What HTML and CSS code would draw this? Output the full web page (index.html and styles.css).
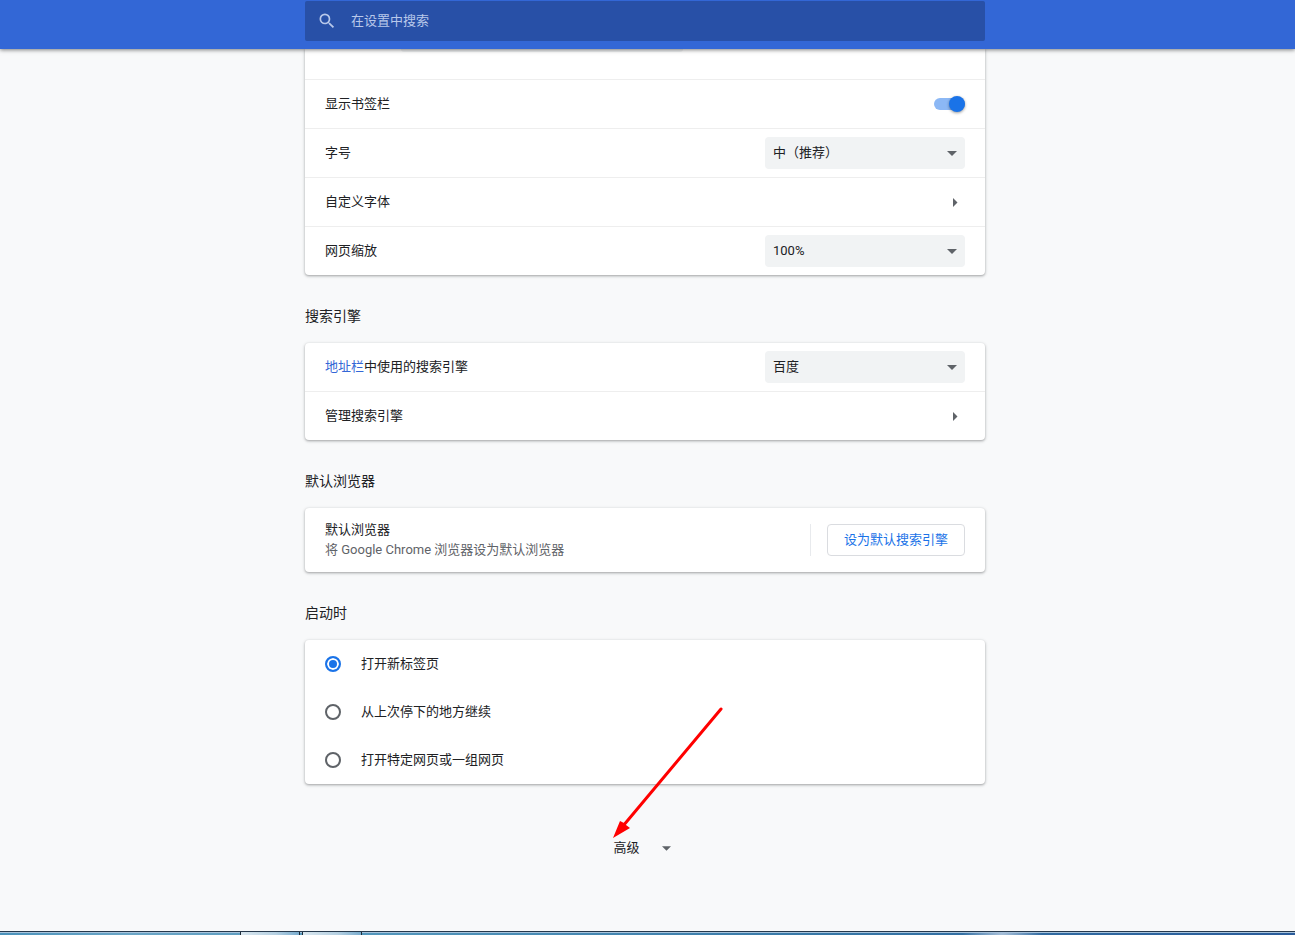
FILE: index.html
```html
<!DOCTYPE html>
<html lang="zh-CN">
<head>
<meta charset="utf-8">
<meta name="viewport" content="width=device-width, initial-scale=1">
<title>设置</title>
<link rel="stylesheet" href="styles.css">
</head>
<body>
<header class="toolbar">
  <label class="search">
    <svg class="search-icon" viewBox="0 0 24 24" aria-hidden="true"><path d="M15.5 14h-.79l-.28-.27A6.471 6.471 0 0 0 16 9.5 6.5 6.5 0 1 0 9.5 16c1.61 0 3.09-.59 4.23-1.57l.27.28v.79l5 4.99L20.49 19l-4.99-5zm-6 0C7.01 14 5 11.99 5 9.5S7.01 5 9.5 5 14 7.01 14 9.5 11.99 14 9.5 14z"/></svg>
    <input class="search-input" type="search" placeholder="在设置中搜索" aria-label="在设置中搜索">
  </label>
</header>
<main class="content">
  <section class="card card-scrolled">
    <div class="row-partial"><div class="field-edge"></div></div>
    <div class="row">
      <label for="bookmarks">显示书签栏</label>
      <input class="toggle" id="bookmarks" type="checkbox" role="switch" checked>
    </div>
    <div class="row">
      <label for="font-size">字号</label>
      <div class="select-wrap">
        <select class="select" id="font-size"><option>中（推荐）</option></select>
        <svg class="select-arrow" viewBox="0 0 10 5" aria-hidden="true"><path d="M0 0h10L5 5z"/></svg>
      </div>
    </div>
    <button class="row row-button" type="button">
      <span>自定义字体</span>
      <svg class="row-arrow" viewBox="0 0 5 9" aria-hidden="true"><path d="M0 0v9l4.500-4.500z"/></svg>
    </button>
    <div class="row">
      <label for="zoom">网页缩放</label>
      <div class="select-wrap">
        <select class="select" id="zoom"><option>100%</option></select>
        <svg class="select-arrow" viewBox="0 0 10 5" aria-hidden="true"><path d="M0 0h10L5 5z"/></svg>
      </div>
    </div>
  </section>

  <h2 class="heading">搜索引擎</h2>
  <section class="card">
    <div class="row">
      <label for="engine"><a class="link" href="#omnibox">地址栏</a>中使用的搜索引擎</label>
      <div class="select-wrap">
        <select class="select" id="engine"><option>百度</option></select>
        <svg class="select-arrow" viewBox="0 0 10 5" aria-hidden="true"><path d="M0 0h10L5 5z"/></svg>
      </div>
    </div>
    <button class="row row-button" type="button">
      <span>管理搜索引擎</span>
      <svg class="row-arrow" viewBox="0 0 5 9" aria-hidden="true"><path d="M0 0v9l4.500-4.500z"/></svg>
    </button>
  </section>

  <h2 class="heading">默认浏览器</h2>
  <section class="card">
    <div class="row row-tall">
      <div class="row-text">
        <div>默认浏览器</div>
        <div class="secondary">将 Google Chrome 浏览器设为默认浏览器</div>
      </div>
      <div class="action"><button class="outline-button" type="button">设为默认搜索引擎</button></div>
    </div>
  </section>

  <h2 class="heading">启动时</h2>
  <section class="card">
    <label class="radio-row"><input class="radio" type="radio" name="startup" checked><span>打开新标签页</span></label>
    <label class="radio-row"><input class="radio" type="radio" name="startup"><span>从上次停下的地方继续</span></label>
    <label class="radio-row"><input class="radio" type="radio" name="startup"><span>打开特定网页或一组网页</span></label>
  </section>

  <div class="advanced">
    <button class="advanced-button" type="button">
      <span>高级</span>
      <svg class="advanced-arrow" viewBox="0 0 10 5" aria-hidden="true"><path d="M0 0h10L5 5z"/></svg>
    </button>
    <svg class="pointer" viewBox="0 0 112 134" aria-hidden="true">
      <path class="pointer-line" d="M108 4 10 121"/>
      <path class="pointer-head" d="M0 133 7 116l4 2 2 2 4 3z"/>
    </svg>
  </div>
</main>
<footer class="taskbar">
  <div class="task"></div>
  <div class="task"></div>
</footer>
</body>
</html>
```

FILE: styles.css
```css
* {
  box-sizing: border-box;
}

body {
  margin: 0;
  min-height: 100vh;
  display: flex;
  flex-direction: column;
  background: #f8f9fa;
  color: #202124;
  font: 13px/20px Roboto, "Noto Sans CJK SC", sans-serif;
}

button,
input,
select {
  font: inherit;
  color: inherit;
  margin: 0;
}

.toolbar {
  position: sticky;
  top: 0;
  z-index: 2;
  padding: 1px 5px 8px 0;
  background: #3367d6;
  box-shadow: 0 1px 4px rgba(0, 0, 0, 0.5);
}

.search {
  display: flex;
  align-items: center;
  gap: 14px;
  max-width: 680px;
  height: 40px;
  margin: 0 auto;
  padding: 0 12px;
  border-radius: 2px;
  background: #2850a7;
}

.search-icon {
  width: 20px;
  height: 20px;
  fill: #b8c8ea;
}

.search-input {
  flex: 1;
  height: 20px;
  padding: 0;
  border: 0;
  outline: 0;
  background: transparent;
  color: #fff;
}

.search-input::placeholder {
  color: #b8c8ea;
}

.content {
  flex: 1;
  width: 100%;
  max-width: 685px;
  margin: 0 auto;
  padding-right: 5px;
}

.card {
  border-radius: 4px;
  background: #fff;
  box-shadow: 0 1px 2px rgba(60, 64, 67, 0.3), 0 1px 3px 1px rgba(60, 64, 67, 0.15);
}

.card-scrolled {
  border-top-left-radius: 0;
  border-top-right-radius: 0;
}

.heading {
  margin: 0;
  padding: 30px 0 16px;
  font-size: 14px;
  font-weight: 400;
  line-height: 22px;
}

.row-partial {
  height: 30px;
  padding-left: 96px;
}

.field-edge {
  width: 282px;
  height: 3px;
  border-radius: 0 0 4px 4px;
  background: #f1f3f4;
}

.row {
  display: flex;
  align-items: center;
  justify-content: space-between;
  width: 100%;
  height: 48px;
  padding: 0 20px;
}

.row-partial + .row,
.row + .row {
  height: 49px;
  border: 0;
  border-top: 1px solid #eee;
}

.row-button {
  background: transparent;
  text-align: left;
}

.row-tall {
  height: 64px;
}

.link {
  color: #3367d6;
  text-decoration: none;
}

.secondary {
  color: #5f6368;
}

.select-wrap {
  position: relative;
  width: 200px;
}

.select {
  appearance: none;
  display: block;
  width: 100%;
  height: 32px;
  padding: 0 24px 0 8px;
  border: 0;
  border-radius: 4px;
  background: #f1f3f4;
}

.select-arrow {
  position: absolute;
  top: 14px;
  right: 8px;
  width: 10px;
  height: 5px;
  fill: #5f6368;
  pointer-events: none;
}

.row-arrow {
  width: 5px;
  height: 9px;
  margin-right: 7px;
  fill: #5f6368;
}

.toggle {
  appearance: none;
  display: flex;
  align-items: center;
  justify-content: flex-end;
  width: 31px;
  height: 12px;
  border-radius: 6px;
  background: #8cb8f5;
}

.toggle::before {
  content: "";
  flex: none;
  width: 16px;
  height: 16px;
  border-radius: 50%;
  background: #1a73e8;
  box-shadow: 0 1px 3px rgba(0, 0, 0, 0.4);
}

.toggle:not(:checked) {
  justify-content: flex-start;
  background: #bdc1c6;
}

.action {
  padding-left: 16px;
  border-left: 1px solid #e8eaed;
}

.outline-button {
  display: block;
  height: 32px;
  padding: 0 16px;
  border: 1px solid #dadce0;
  border-radius: 4px;
  background: #fff;
  color: #1a73e8;
}

.radio-row {
  display: flex;
  align-items: center;
  gap: 20px;
  height: 48px;
  padding: 0 20px;
}

.radio {
  appearance: none;
  width: 16px;
  height: 16px;
  border: 2px solid #5f6368;
  border-radius: 50%;
}

.radio:checked {
  border-color: #1a73e8;
  background: #1a73e8;
  box-shadow: inset 0 0 0 2px #fff;
}

.advanced {
  position: relative;
  display: flex;
  justify-content: center;
  padding: 48px 0;
}

.advanced-button {
  display: flex;
  align-items: center;
  gap: 22px;
  height: 32px;
  padding: 0 14px 0 8px;
  border: 0;
  background: transparent;
}

.advanced-arrow {
  width: 9px;
  height: 5px;
  fill: #5f6368;
}

/* Arrow annotation drawn over the page, pointing at the advanced button */
.pointer {
  position: absolute;
  top: -79px;
  left: calc(50% - 32px);
  width: 112px;
  height: 134px;
  pointer-events: none;
}

.pointer-line {
  stroke: #f00;
  stroke-width: 3;
  stroke-linecap: round;
}

.pointer-head {
  fill: #f00;
}

.taskbar {
  display: flex;
  gap: 2px;
  height: 4px;
  padding-left: 240px;
  border-top: 1px solid #26384c;
  background:
    radial-gradient(ellipse 40px 8px at 1002px 2px, #a9c1da, transparent),
    linear-gradient(#a9c4dc 1px, transparent 1px),
    linear-gradient(90deg, #4a92bb, #6aa5c6 10%, #5195bb 30%, #3676a6 65%, #2a5c9b);
}

.task {
  width: 60px;
  border: 1px solid #1c2b38;
  border-width: 0 1px;
  background: linear-gradient(90deg, #d9e6ee, #b5d0e2 60%, #79acce);
}
```
